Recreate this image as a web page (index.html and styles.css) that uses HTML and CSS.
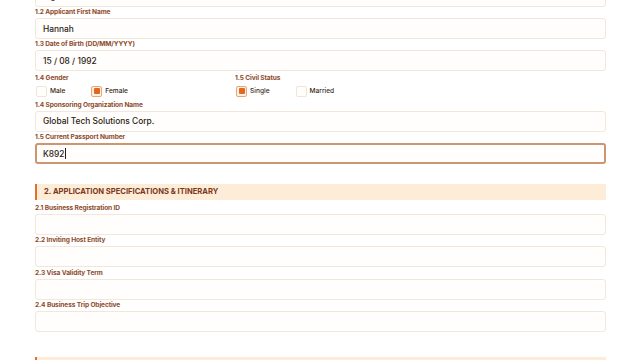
FILE: index.html
```html
<!DOCTYPE html>
<html>
<head>
<meta charset="utf-8">
<link rel="stylesheet" href="styles.css">
</head>
<body>
<main class="form">
  <section class="section">
    <div class="field">
      <label class="label">1.1 Applicant Last Name</label>
      <div class="input">Ingram</div>
    </div>
    <div class="field">
      <label class="label">1.2 Applicant First Name</label>
      <div class="input">Hannah</div>
    </div>
    <div class="field">
      <label class="label">1.3 Date of Birth (DD/MM/YYYY)</label>
      <div class="input">15 / 08 / 1992</div>
    </div>
    <div class="choice-row">
      <div class="choice-group">
        <span class="label">1.4 Gender</span>
        <div class="options">
          <span class="option"><span class="box"></span>Male</span>
          <span class="option"><span class="box checked"></span>Female</span>
        </div>
      </div>
      <div class="choice-group">
        <span class="label">1.5 Civil Status</span>
        <div class="options">
          <span class="option"><span class="box checked"></span>Single</span>
          <span class="option"><span class="box"></span>Married</span>
        </div>
      </div>
    </div>
    <div class="field">
      <label class="label">1.4 Sponsoring Organization Name</label>
      <div class="input">Global Tech Solutions Corp.</div>
    </div>
    <div class="field">
      <label class="label">1.5 Current Passport Number</label>
      <div class="input focused">K892<span class="caret"></span></div>
    </div>
  </section>

  <section class="section second">
    <h2 class="section-title">2. APPLICATION SPECIFICATIONS &amp; ITINERARY</h2>
    <div class="field">
      <label class="label">2.1 Business Registration ID</label>
      <div class="input"></div>
    </div>
    <div class="field">
      <label class="label">2.2 Inviting Host Entity</label>
      <div class="input"></div>
    </div>
    <div class="field">
      <label class="label">2.3 Visa Validity Term</label>
      <div class="input"></div>
    </div>
    <div class="field">
      <label class="label">2.4 Business Trip Objective</label>
      <div class="input"></div>
    </div>
  </section>

  <section class="section third">
    <h2 class="section-title">3. TRAVEL HISTORY &amp; DECLARATIONS</h2>
  </section>
</main>
</body>
</html>
```
FILE: styles.css
```css
html, body {
  margin: 0;
  padding: 0;
  background: #ffffff;
  overflow: hidden;
}
body {
  width: 641px;
  height: 360px;
  font-family: Inter, "Open Sans", sans-serif;
}
.form {
  width: 571px;
  padding: 0 35px;
  margin-top: -25.66px;
}
.section {
  display: flex;
  flex-direction: column;
}
.section.second {
  margin-top: 19.67px;
}
.section.third {
  margin-top: 24.7px;
}
.field {
  display: flex;
  flex-direction: column;
  gap: 1px;
  margin-top: 1.33px;
}
.label {
  display: block;
  font-size: 6.6px;
  line-height: 9px;
  font-weight: 700;
  color: #8e4c2c;
  letter-spacing: -0.12px;
}
.input {
  box-sizing: border-box;
  height: 21px;
  border: 1px solid #f1e7da;
  border-radius: 3px;
  background: #fffefc;
  padding: 0 7px;
  display: flex;
  align-items: center;
  font-size: 8.4px;
  font-weight: 500;
  color: #2b1a12;
}
.input.focused {
  border: 2px solid #cc9670;
  padding-left: 6px;
}
.caret {
  display: inline-block;
  width: 1px;
  height: 11px;
  background: #2b1a12;
  margin-left: 1px;
}
.choice-row {
  display: grid;
  grid-template-columns: 200px 1fr;
  height: 28.34px;
  padding-top: 2.2px;
  box-sizing: border-box;
}
.choice-group {
  display: flex;
  flex-direction: column;
  gap: 3px;
}
.options {
  display: flex;
  gap: 26px;
  padding-left: 1px;
}
.option {
  display: flex;
  align-items: center;
  gap: 3px;
  font-size: 6.6px;
  font-weight: 500;
  color: #3a2a22;
}
.box {
  box-sizing: border-box;
  width: 11px;
  height: 11px;
  border: 1px solid #efe5d8;
  border-radius: 2px;
  background: #fffefc;
  display: flex;
  align-items: center;
  justify-content: center;
}
.box.checked {
  border: 1px solid #e8a77a;
  background: #fdf0e4;
}
.box.checked::after {
  content: "";
  width: 6px;
  height: 6px;
  border-radius: 1px;
  background: #e2671f;
}
.section-title {
  margin: 0 0 2.7px 0;
  height: 16px;
  background: #fdecd8;
  border-left: 2px solid #e0712c;
  padding-left: 7px;
  display: flex;
  align-items: center;
  font-size: 7.6px;
  font-weight: 700;
  color: #7a3819;
}
```
